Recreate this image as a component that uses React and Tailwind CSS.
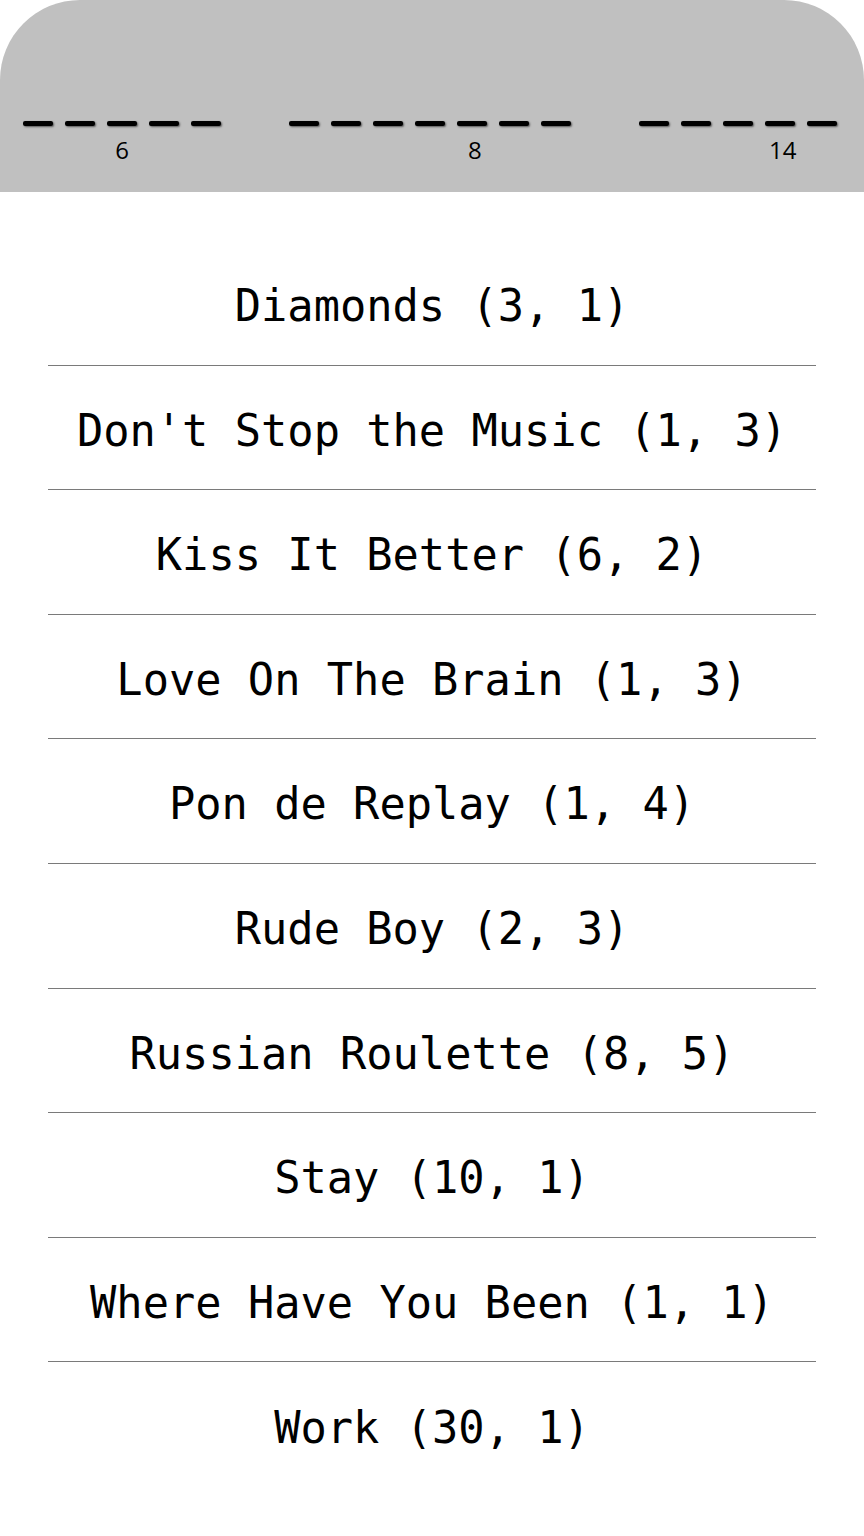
import React from 'react';

// blanks for each hidden word, with the hint number under it
const grupos = [
  { tracos: 5, dica: '6', recuo: 'justify-center' , pl: '' },
  { tracos: 7, dica: '8', recuo: 'justify-start', pl: 'pl-[179px]' },
  { tracos: 5, dica: '14', recuo: 'justify-start', pl: 'pl-[130px]' },
];

const musicas = [
  'Diamonds (3, 1)',
  "Don't Stop the Music (1, 3)",
  'Kiss It Better (6, 2)',
  'Love On The Brain (1, 3)',
  'Pon de Replay (1, 4)',
  'Rude Boy (2, 3)',
  'Russian Roulette (8, 5)',
  'Stay (10, 1)',
  'Where Have You Been (1, 1)',
  'Work (30, 1)',
];

function Grupo({ tracos, dica, recuo, pl }) {
  return (
    <div className="flex flex-col">
      <div className="flex gap-[12px] h-[6px] items-center">
        {Array.from({ length: tracos }).map((_, i) => (
          <div
            key={i}
            className="w-[30px] h-[5px] bg-black rounded-[2px] shadow-[1px_1px_2px_rgba(0,0,0,0.55)]"
          />
        ))}
      </div>
      <div className={`flex ${recuo} ${pl} mt-[11px]`}>
        <span className="text-[24px] leading-[26px] text-black font-['Open_Sans',sans-serif]">{dica}</span>
      </div>
    </div>
  );
}

export default function App() {
  return (
    <div className="w-[864px] min-h-[1536px] bg-white">
      <header className="h-[192px] bg-[#c0c0c0] rounded-t-[80px] pt-[120px] pl-[23px] flex items-start gap-[68px]">
        {grupos.map((g, i) => (
          <Grupo key={i} {...g} />
        ))}
      </header>

      <main className="mt-[49px] mx-12">
        {musicas.map((m, i) => (
          <div
            key={m}
            className={`h-[124.6px] pt-[6px] flex items-center justify-center ${i < musicas.length - 1 ? 'border-b border-[#7a7a7a]' : ''}`}
          >
            <span className="text-[43.7px] leading-none text-black whitespace-pre font-['DejaVu_Sans_Mono',monospace]">
              {m}
            </span>
          </div>
        ))}
      </main>
    </div>
  );
}
